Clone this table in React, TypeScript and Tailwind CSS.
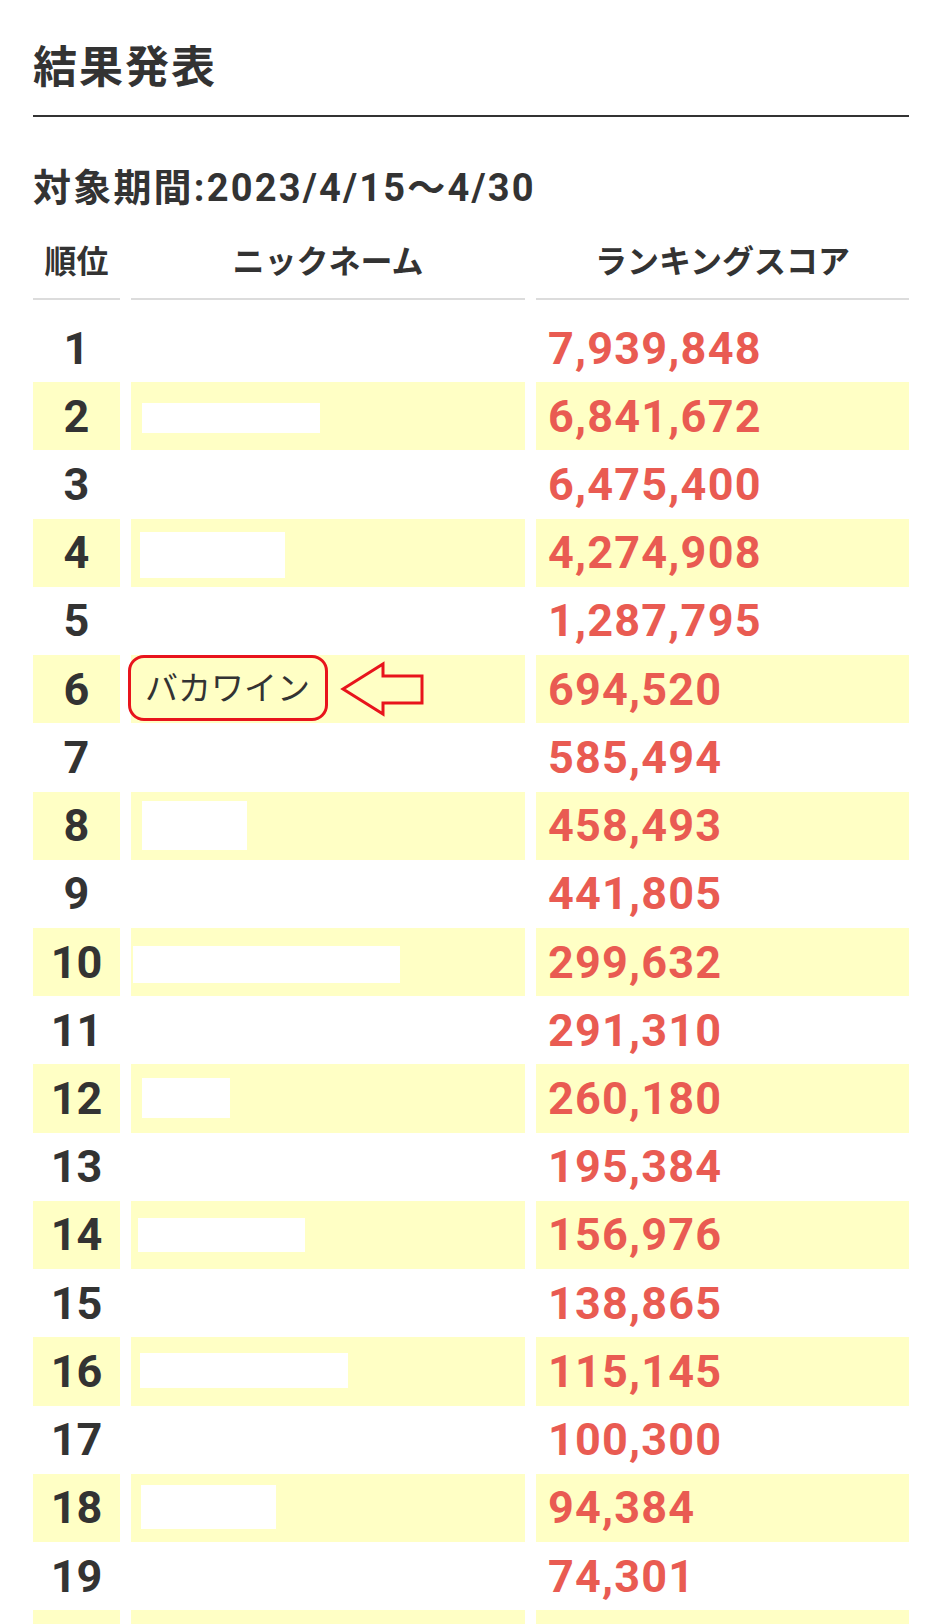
import React from "react";

type Row = {
  rank: number;
  score: string;
  mask?: { ml: string; mt: string; w: string; h: string };
  mark?: boolean;
};

const rows: Row[] = [
  { rank: 1, score: "7,939,848" },
  { rank: 2, score: "6,841,672", mask: { ml: "ml-[11px]", mt: "mt-[21px]", w: "w-[178px]", h: "h-[30px]" } },
  { rank: 3, score: "6,475,400" },
  { rank: 4, score: "4,274,908", mask: { ml: "ml-[9px]", mt: "mt-[13px]", w: "w-[145px]", h: "h-[46px]" } },
  { rank: 5, score: "1,287,795" },
  { rank: 6, score: "694,520", mark: true },
  { rank: 7, score: "585,494" },
  { rank: 8, score: "458,493", mask: { ml: "ml-[11px]", mt: "mt-[9px]", w: "w-[105px]", h: "h-[49px]" } },
  { rank: 9, score: "441,805" },
  { rank: 10, score: "299,632", mask: { ml: "ml-[2px]", mt: "mt-[18px]", w: "w-[267px]", h: "h-[37px]" } },
  { rank: 11, score: "291,310" },
  { rank: 12, score: "260,180", mask: { ml: "ml-[11px]", mt: "mt-[14px]", w: "w-[88px]", h: "h-[40px]" } },
  { rank: 13, score: "195,384" },
  { rank: 14, score: "156,976", mask: { ml: "ml-[7px]", mt: "mt-[17px]", w: "w-[167px]", h: "h-[34px]" } },
  { rank: 15, score: "138,865" },
  { rank: 16, score: "115,145", mask: { ml: "ml-[9px]", mt: "mt-[16px]", w: "w-[208px]", h: "h-[35px]" } },
  { rank: 17, score: "100,300" },
  { rank: 18, score: "94,384", mask: { ml: "ml-[10px]", mt: "mt-[11px]", w: "w-[135px]", h: "h-[44px]" } },
  { rank: 19, score: "74,301" },
  { rank: 20, score: "" },
];

const LeftArrow = () => (
  <svg width="86" height="56" viewBox="0 0 86 56" className="ml-[12px] shrink-0">
    <path
      d="M3 28 L43 3 L43 15 L82 15 L82 42 L43 42 L43 53 Z"
      fill="none"
      stroke="#e8141c"
      strokeWidth="3"
      strokeLinejoin="miter"
    />
  </svg>
);

const App = () => {
  return (
    <div
      className="min-h-screen bg-white pl-[33px] text-[#333]"
      style={{ fontFamily: 'Roboto, "Noto Sans CJK JP", sans-serif' }}
    >
      <div className="w-[876px]">
        <h2 className="h-[117px] border-b-2 border-[#333] pt-[46px] text-[44px] font-bold leading-[44px] tracking-[2px]">
          結果発表
        </h2>
        <p className="pt-[52px] text-[38px] font-bold leading-[38px] tracking-[2.2px]">
          対象期間:2023/4/15〜4/30
        </p>

        <div className="grid grid-cols-[87px_394px_373px] gap-x-[11px]">
          {["順位", "ニックネーム", "ランキングスコア"].map((h) => (
            <div
              key={h}
              className="mb-[14px] flex h-[93px] items-end justify-center border-b-2 border-[#dcdcdc] pb-[20px] text-[32px] font-bold leading-[32px]"
            >
              {h}
            </div>
          ))}

          {rows.map((r) => {
            const bg = r.rank % 2 === 0 ? "bg-[#ffffc5]" : "bg-white";
            return (
              <React.Fragment key={r.rank}>
                <div className={`flex h-[68.22px] items-center justify-center text-[45px] font-bold leading-none ${bg}`}>
                  {r.rank < 20 ? r.rank : ""}
                </div>
                <div className={`flex h-[68.22px] ${r.mark ? "items-center" : "items-start"} ${bg}`}>
                  {r.mask && (
                    <div className={`bg-white ${r.mask.ml} ${r.mask.mt} ${r.mask.w} ${r.mask.h}`} />
                  )}
                  {r.mark && (
                    <>
                      <div className="ml-[-3px] flex h-[66px] w-[200px] shrink-0 items-center self-start rounded-[16px] border-[3px] border-[#e8141c] pl-[14px] text-[33px] leading-none">
                        バカワイン
                      </div>
                      <LeftArrow />
                    </>
                  )}
                </div>
                <div className={`flex h-[68.22px] items-center pl-[12px] text-[45px] font-bold leading-none tracking-[1.2px] text-[#e95b52] ${bg}`}>
                  {r.score}
                </div>
              </React.Fragment>
            );
          })}
        </div>
      </div>
    </div>
  );
};

export default App;
